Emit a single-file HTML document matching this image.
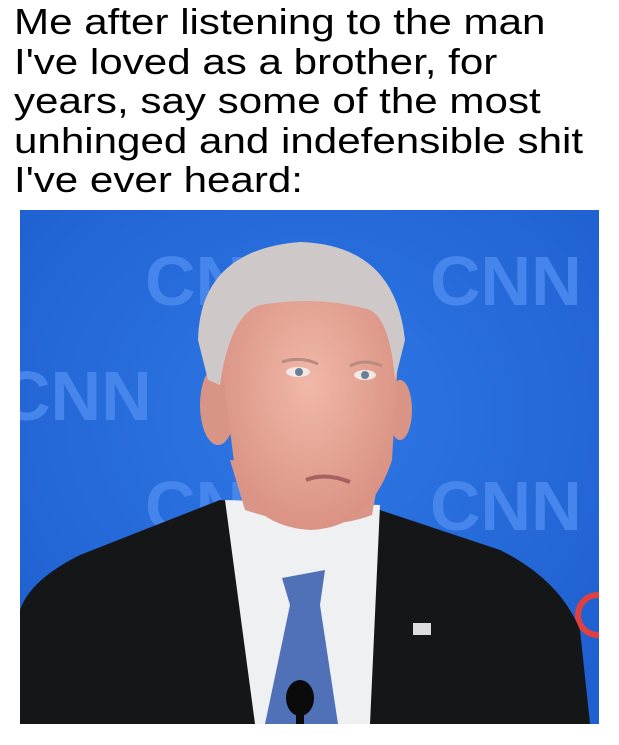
<!DOCTYPE html>
<html><head><meta charset="utf-8"><style>
html,body{margin:0;padding:0;background:#fff;width:619px;height:745px;overflow:hidden}
.t{position:absolute;left:14px;top:2px;font-family:"Liberation Sans",sans-serif;font-size:36px;line-height:39.6px;color:#000;transform:scaleX(1.17);transform-origin:0 0;white-space:nowrap}
svg{position:absolute;left:20px;top:210px}
</style></head><body>
<div class="t">Me after listening to the man<br>I've loved as a brother, for<br>years, say some of the most<br>unhinged and indefensible shit<br>I've ever heard:</div>
<svg width="579" height="514" viewBox="0 0 579 514">
<defs>
<radialGradient id="bg" cx="50%" cy="40%" r="70%"><stop offset="0" stop-color="#2f78e6"/><stop offset="1" stop-color="#1f5fcf"/></radialGradient>
<radialGradient id="face" cx="50%" cy="45%" r="60%"><stop offset="0" stop-color="#f0b8a8"/><stop offset="1" stop-color="#d88f80"/></radialGradient>
</defs>
<rect width="579" height="514" fill="url(#bg)"/>
<g font-family="Liberation Sans" font-size="70" font-weight="bold" fill="#4686ec">
<text x="125" y="95">CNN</text>
<text x="410" y="95">CNN</text>
<text x="-20" y="210">CNN</text>
<text x="125" y="320">CNN</text>
<text x="410" y="320">CNN</text>
</g>
<circle cx="578" cy="405" r="20" fill="none" stroke="#e04040" stroke-width="6"/>
<path d="M0 400 Q10 370 60 345 L200 290 L360 300 L480 340 Q540 370 560 420 L570 514 L0 514Z" fill="#141618"/>
<path d="M205 290 L360 295 L350 514 L235 514 Z" fill="#eef0f2"/>
<path d="M262 368 L305 360 L300 395 L318 514 L245 514 L270 395Z" fill="#5070b8"/>
<path d="M210 250 L360 260 L352 305 Q300 325 225 300Z" fill="#d9958a"/>
<ellipse cx="198" cy="195" rx="18" ry="40" fill="#d89585"/>
<ellipse cx="380" cy="200" rx="12" ry="30" fill="#d89585"/>
<path d="M200 140 Q205 60 290 55 Q375 60 378 150 L372 250 Q350 318 290 320 Q230 316 215 260Z" fill="url(#face)"/>
<path d="M178 130 Q180 40 280 32 Q375 35 385 130 L375 170 Q370 110 350 100 Q300 85 240 95 Q210 105 200 175 L188 170Z" fill="#cfc8c8"/>
<ellipse cx="278" cy="162" rx="12" ry="5" fill="#f2e8e4"/><circle cx="279" cy="162" r="4" fill="#6a7f95"/>
<ellipse cx="345" cy="165" rx="11" ry="5" fill="#f2e8e4"/><circle cx="345" cy="165" r="4" fill="#6a7f95"/>
<path d="M262 152 Q280 146 298 154 M330 156 Q345 148 362 156" stroke="#b88a80" stroke-width="3" fill="none"/>
<path d="M286 270 Q305 262 330 272" stroke="#a86060" stroke-width="4" fill="none"/>
<ellipse cx="280" cy="488" rx="14" ry="18" fill="#0a0a0a"/>
<rect x="276" y="495" width="8" height="20" fill="#0a0a0a"/>
<rect x="393" y="413" width="18" height="12" fill="#ddd"/>
</svg>
</body></html>
